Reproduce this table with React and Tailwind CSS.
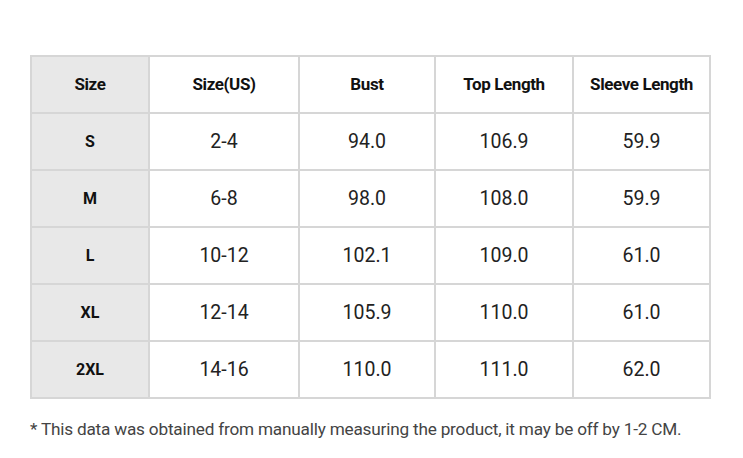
export default function App() {
  const rows = [
    ["S", "2-4", "94.0", "106.9", "59.9"],
    ["M", "6-8", "98.0", "108.0", "59.9"],
    ["L", "10-12", "102.1", "109.0", "61.0"],
    ["XL", "12-14", "105.9", "110.0", "61.0"],
    ["2XL", "14-16", "110.0", "111.0", "62.0"],
  ];
  const widths = ["w-[118px]", "w-[150px]", "w-[136px]", "w-[138px]", "w-[137px]"];
  const heads = ["Size", "Size(US)", "Bust", "Top Length", "Sleeve Length"];
  return (
    <div className="w-[743px] h-[458px] bg-white font-['Roboto',sans-serif] pt-[55px] pl-[30px]">
      <table className="border-collapse table-fixed w-[681px]">
        <colgroup>
          {widths.map((w, i) => (
            <col key={i} className={w} />
          ))}
        </colgroup>
        <thead>
          <tr className="h-[57px]">
            {heads.map((h, i) => (
              <th
                key={i}
                className={`border-2 border-[#d6d6d6] text-[17px] font-bold text-[#111] tracking-[-0.4px] ${i === 0 ? "bg-[#e8e8e8]" : "bg-white"}`}
              >
                {h}
              </th>
            ))}
          </tr>
        </thead>
        <tbody>
          {rows.map((r, ri) => (
            <tr key={ri} className="h-[57px]">
              {r.map((c, ci) => (
                <td
                  key={ci}
                  className={`border-2 border-[#d6d6d6] text-center ${ci === 0 ? "bg-[#e8e8e8] text-[16px] font-bold text-[#111]" : "bg-white text-[19.5px] text-[#222]"}`}
                >
                  {c}
                </td>
              ))}
            </tr>
          ))}
        </tbody>
      </table>
      <p className="mt-[18px] text-[17.2px] text-[#444] tracking-[-0.2px]">
        * This data was obtained from manually measuring the product, it may be off by 1-2 CM.
      </p>
    </div>
  );
}
